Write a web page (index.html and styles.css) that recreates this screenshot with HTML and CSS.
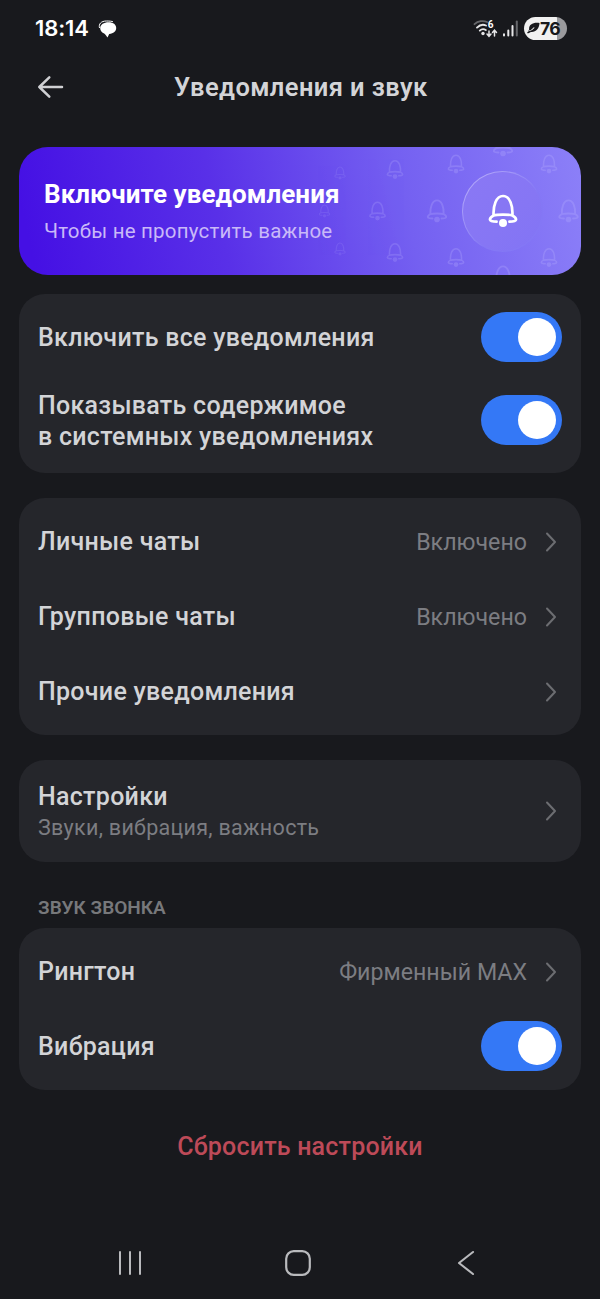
FILE: index.html
```html
<!DOCTYPE html>
<html lang="ru">
<head>
<meta charset="utf-8">
<title>Уведомления и звук</title>
<link rel="stylesheet" href="styles.css">
</head>
<body>
<svg class="defs" aria-hidden="true">
  <symbol id="bell" viewBox="0 0 30 34">
    <path d="M5.6 21.5C5 12 8 2 15 2s10 10 9.400 19.500M5.600 21.500C9 20.300 21 20.300 24.400 21.500M5.600 21.500C3.500 22.600 1.700 24 2 25.800 2.300 27.400 4.500 27.700 8.600 27.700M24.400 21.500C26.500 22.600 28.300 24 28 25.800 27.700 27.400 25.500 27.700 21.400 27.700" fill="none" stroke="currentColor" stroke-width="2.700" stroke-linecap="round" stroke-linejoin="round"/>
    <circle cx="15" cy="29" r="4" fill="currentColor"/>
  </symbol>
  <symbol id="chevron" viewBox="0 0 12 20">
    <path d="M2 1.500L10 10L2 18.500" fill="none" stroke="currentColor" stroke-width="2" stroke-linecap="round" stroke-linejoin="round"/>
  </symbol>
</svg>
<div class="screen">
  <div class="status">
    <span class="clock">18:14</span>
    <svg class="chat" width="19" height="19" viewBox="0 0 19 19"><path d="M1.500 8C.5 4 3 1 8.500 1 12 1 14 1.300 15 1.800" fill="none" stroke="#fff" stroke-width="1"/><path d="M10.500 2.300C15.300 2.300 18.200 4.700 18.200 8s-2.700 5.500-7 6L9.500 17.500C8.500 16 7.800 15.200 6.200 13.600 4 12.500 2.200 10.700 2.200 8.200 2.200 4.500 6 2.300 10.500 2.300z" fill="#fff"/></svg>
    <svg class="signals" width="48" height="20" viewBox="0 0 48 20">
      <g fill="none" stroke-linecap="round">
        <path d="M1.500 4.200C5 .8 10.500.3 14 2" stroke="#66676b" stroke-width="1.800"/>
        <path d="M4 7.600C7 4.600 10.500 4.300 13 5.500M6.800 10.600C8.500 9 11 8.900 12.800 10" stroke="#e6e6e8" stroke-width="1.900"/>
        <path d="M16 11V16M14 14l2 2.300 2-2.300M21.500 16V10.500M19.500 12.500l2-2.300 2 2.300" stroke="#e6e6e8" stroke-width="1.500"/>
      </g>
      <circle cx="10" cy="13.500" r="1.700" fill="#e6e6e8"/>
      <text class="wifi-gen" x="14.700" y="8.300">6</text>
      <g stroke-width="2" stroke-linecap="round"><path d="M31 14.200V15.500M35.300 10.500V15.500M39.500 6V15.500" stroke="#e6e6e8"/><path d="M43.800 1.500V15.500" stroke="#66676b"/></g>
    </svg>
    <div class="battery">
      <svg width="13" height="14" viewBox="0 0 14 14"><path d="M13.500 1.500C7 .6 1.800 2.800 2.300 8.500L1 10.500 3 11C9 12.300 13 8 13.500 1.500z" fill="#18191d"/><path d="M1.500 10.300C3.500 10.200 6 8.800 7.800 6.500" fill="none" stroke="#f1f1f1" stroke-width="1.100"/><path d="M.5 12.300L3.500 10.800" stroke="#18191d" stroke-width="1.600"/></svg>
      <span>76</span>
    </div>
  </div>

  <header class="header">
    <svg class="back" width="28" height="24" viewBox="0 0 28 24"><path d="M12.300 2.300L2.300 12l10 9.700M2.300 12H25" fill="none" stroke="#cfd0d3" stroke-width="2.500" stroke-linecap="round" stroke-linejoin="round"/></svg>
    <h1 class="title">Уведомления и звук</h1>
  </header>

  <section class="banner">
    <svg class="pattern" width="562" height="128" viewBox="0 0 562 128">
      <g opacity=".55">
        <use href="#bell" x="315" y="19" width="12" height="14"/>
        <use href="#bell" x="299.500" y="57" width="12" height="14"/>
        <use href="#bell" x="315" y="95" width="12" height="14"/>
      </g>
      <g opacity=".85">
        <use href="#bell" x="367" y="12.500" width="18" height="20"/>
        <use href="#bell" x="367" y="95.500" width="18" height="20"/>
        <use href="#bell" x="349.500" y="54" width="18" height="20"/>
      </g>
      <use href="#bell" x="428" y="7" width="18" height="20"/>
      <use href="#bell" x="428" y="100.500" width="18" height="20"/>
      <use href="#bell" x="407" y="52" width="22" height="24"/>
      <use href="#bell" x="473" y="-14" width="22" height="24"/>
      <use href="#bell" x="473" y="118" width="22" height="24"/>
      <use href="#bell" x="521" y="7" width="18" height="20"/>
      <use href="#bell" x="521" y="100.500" width="18" height="20"/>
      <use href="#bell" x="538.500" y="52" width="22" height="24"/>
    </svg>
    <div class="banner-text">
      <h2 class="banner-title">Включите уведомления</h2>
      <p class="banner-sub">Чтобы не пропустить важное</p>
    </div>
    <div class="orb"><svg width="30" height="34"><use href="#bell"/></svg></div>
  </section>

  <section class="card toggles">
    <div class="row"><span class="label">Включить все уведомления</span><i class="switch"></i></div>
    <div class="row tall"><span class="label">Показывать содержимое<br>в&nbsp;системных уведомлениях</span><i class="switch"></i></div>
  </section>

  <section class="card chats">
    <div class="row"><span class="label">Личные чаты</span><span class="value">Включено</span><svg class="chev"><use href="#chevron"/></svg></div>
    <div class="row"><span class="label">Групповые чаты</span><span class="value">Включено</span><svg class="chev"><use href="#chevron"/></svg></div>
    <div class="row"><span class="label">Прочие уведомления</span><svg class="chev"><use href="#chevron"/></svg></div>
  </section>

  <section class="card settings">
    <div class="row"><div class="stack"><span class="label">Настройки</span><span class="sub">Звуки, вибрация, важность</span></div><svg class="chev"><use href="#chevron"/></svg></div>
  </section>

  <h3 class="caption">ЗВУК ЗВОНКА</h3>
  <section class="card ring">
    <div class="row"><span class="label">Рингтон</span><span class="value">Фирменный MAX</span><svg class="chev"><use href="#chevron"/></svg></div>
    <div class="row"><span class="label">Вибрация</span><i class="switch"></i></div>
  </section>

  <div class="reset">Сбросить настройки</div>

  <nav class="nav">
    <svg width="26" height="26" viewBox="0 0 26 26"><path d="M2 2V24M12 2V24M22 2V24" stroke="#b9babd" stroke-width="2" stroke-linecap="round"/></svg>
    <svg width="28" height="28" viewBox="0 0 28 28"><rect x="2.200" y="2.200" width="23.600" height="23.600" rx="7.500" fill="none" stroke="#b9babd" stroke-width="2.200"/></svg>
    <svg width="18" height="26" viewBox="0 0 18 26"><path d="M16 2L2 13L16 24" fill="none" stroke="#b9babd" stroke-width="2.100" stroke-linecap="round" stroke-linejoin="round"/></svg>
  </nav>
</div>
</body>
</html>
```
FILE: styles.css
```css
* { box-sizing: border-box; margin: 0; padding: 0; }
body { background: #18191d; font-family: Roboto, "Liberation Sans", sans-serif; color: #d3d4d7; }
.defs { position: absolute; width: 0; height: 0; }
.screen { width: 600px; height: 1299px; display: flex; flex-direction: column; padding: 0 19px; overflow: hidden; }

.status { height: 56px; display: flex; align-items: center; padding: 0 14px 0 16px; flex: none; }
.clock { font-family: Inter, Roboto, sans-serif; font-size: 22px; font-weight: 600; letter-spacing: -.1px; color: #fff; width: 63px; white-space: nowrap; }
.chat { margin-top: 2px; }
.signals { margin-left: auto; margin-top: 3px; }
.wifi-gen { font: 700 10px Roboto, sans-serif; fill: #fff; }
.battery { width: 43px; height: 23px; margin-left: 3px; border-radius: 12px; background: linear-gradient(90deg, #f1f1f1 76%, #9a9a9d 76%); display: flex; align-items: center; padding-left: 3px; font-family: Inter, sans-serif; font-weight: 700; font-size: 17.500px; letter-spacing: -.6px; color: #18191d; }

.header { height: 61px; display: flex; align-items: center; flex: none; }
.back { margin-left: 18px; }
.title { margin: 1px 0 0 109px; font-size: 25.500px; line-height: 30px; font-weight: 600; letter-spacing: .4px; white-space: nowrap; }

.banner { margin-top: 30px; height: 128px; flex: none; border-radius: 29px; position: relative; overflow: hidden; display: flex; align-items: center; justify-content: space-between; padding: 0 38px 0 25px; background: linear-gradient(77deg, #4510e4 3%, #5930e8 36%, #7460f1 68%, #8c80f8 100%); }
.pattern { position: absolute; inset: 0; color: rgba(190, 180, 255, .26); }
.banner-text { position: relative; white-space: nowrap; }
.banner-title { font-size: 26px; line-height: 32px; font-weight: 700; letter-spacing: .05px; color: #fff; }
.banner-sub { margin-top: 7px; font-size: 20.500px; line-height: 28px; letter-spacing: .2px; color: #c9b9f8; }
.orb { position: relative; width: 81px; height: 81px; border-radius: 50%; display: flex; align-items: center; justify-content: center; color: #fff; border: 1px solid transparent; background: linear-gradient(135deg, #8a78f4, #8676f4 60%, #8274f5) padding-box, linear-gradient(135deg, #c0b5fb, #8478f5 60%) border-box; }

.card { flex: none; border-radius: 26px; background: #25262b; padding: 6px 19px; }
.row { height: 75px; display: flex; align-items: center; }
.label { font-size: 25px; line-height: 31px; font-weight: 500; letter-spacing: .28px; white-space: nowrap; }
.value { margin-left: auto; padding-top: 1px; font-size: 23.200px; line-height: 31px; color: #7c7d82; white-space: nowrap; }
.chev { width: 12px; height: 20px; margin-left: 18px; margin-right: 5px; color: #6c6d71; flex: none; }
.label + .chev, .stack + .chev { margin-left: auto; }
.switch { margin: -1px 0 0 auto; width: 81px; height: 50px; border-radius: 25px; background: #3478f6; padding: 6px; flex: none; }
.switch::after { content: ""; display: block; width: 38px; height: 38px; margin-left: auto; border-radius: 50%; background: #fff; }
.toggles { margin-top: 19px; height: 179px; }
.tall { height: 92px; }
.tall .switch { margin-top: -2px; }
.chats { margin-top: 25px; height: 237px; }
.settings { margin-top: 25px; height: 102px; }
.settings .row { height: 90px; }
.stack { display: flex; flex-direction: column; padding-top: 2px; }
.sub { font-size: 21.500px; line-height: 31px; letter-spacing: .3px; color: #7c7d82; white-space: nowrap; }
.caption { margin: 32px 0 7px 19px; font-size: 19px; line-height: 27px; font-weight: 600; color: #77787b; white-space: nowrap; flex: none; }
.ring { height: 162px; }
.reset { margin-top: 41px; text-align: center; font-size: 25px; line-height: 31px; font-weight: 500; letter-spacing: .2px; color: #bd4a58; }
.nav { margin-top: auto; height: 72px; display: grid; grid-template-columns: 167px 172px 18px; align-items: center; padding-left: 99px; flex: none; }
.nav svg:nth-child(2) { margin-left: -1px; }
```
